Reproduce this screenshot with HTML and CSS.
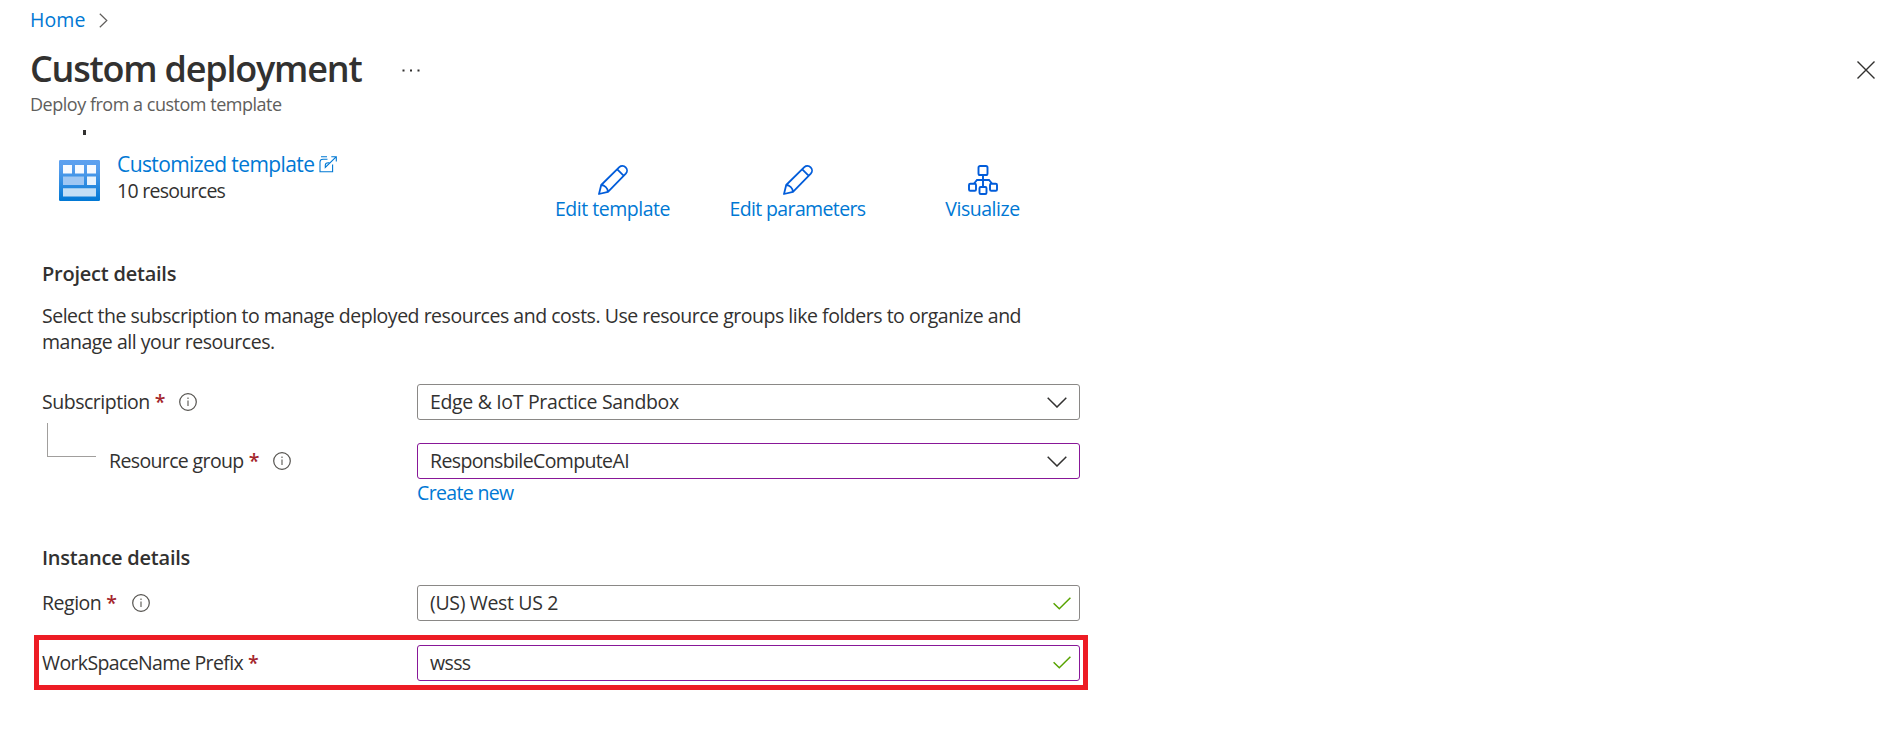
FILE: index.html
```
<!DOCTYPE html>
<html lang="en">
<head>
<meta charset="utf-8">
<title>Custom deployment</title>
<link rel="stylesheet" href="styles.css">
</head>
<body>
<svg class="defs" width="0" height="0" aria-hidden="true">
  <defs>
    <linearGradient id="tile" x1="0" y1="0" x2="0" y2="1">
      <stop offset="0" stop-color="#5ea0ef"/>
      <stop offset="0.2" stop-color="#589eed"/>
      <stop offset="1" stop-color="#0078d4"/>
    </linearGradient>
    <symbol id="info" viewBox="0 0 18 18">
      <circle cx="9" cy="9" r="8.3" fill="none" stroke="#55534f" stroke-width="1.2"/>
      <path d="M9 7.4V13M9 4.6V6" fill="none" stroke="#66645f" stroke-width="1.2"/>
    </symbol>
    <symbol id="chevron" viewBox="0 0 20 11">
      <path d="M.7.7 10 10 19.3.7" fill="none" stroke="#323130" stroke-width="1.5"/>
    </symbol>
    <symbol id="check" viewBox="0 0 18 13">
      <path d="M.6 6.2 6.3 11.8 17.4.7" fill="none" stroke="#57a300" stroke-width="1.5"/>
    </symbol>
    <symbol id="pencil" viewBox="0 0 30 30">
      <path d="M1 29 3.2 20 21.3 2.2a4.6 4.6 0 0 1 6.5 6.5L10 26.800ZM19.300 4.300 25.800 10.800M3.200 20C6.800 20.400 9.600 23.200 10 26.800" fill="none" stroke="#015cda" stroke-width="1.8" stroke-linejoin="round"/>
    </symbol>
  </defs>
</svg>

<nav class="breadcrumb">
  <a class="link home">Home</a>
  <svg class="crumb-arrow" viewBox="0 0 9 15"><path d="M.8.8 7.8 7.5.8 14.2" fill="none" stroke="#605e5c" stroke-width="1.2"/></svg>
</nav>

<header class="header">
  <div>
    <div class="title-row">
      <h1 class="title">Custom deployment</h1>
      <svg class="more" viewBox="0 0 18 3"><path d="M.5.5h2v2h-2zM8 .5h2v2H8zM15.500.5h2v2h-2z" fill="#323130"/></svg>
    </div>
    <p class="subtitle">Deploy from a custom template</p>
  </div>
  <svg class="close" viewBox="0 0 18 18"><path d="M.5.5l17 17M17.500.5l-17 17" fill="none" stroke="#323130" stroke-width="1.4"/></svg>
</header>

<main class="content">
  <!-- descender of the heading scrolled under the header -->
  <div class="scrolled-edge"></div>
  <section class="template">
    <svg class="tile" viewBox="0 0 41 41">
      <rect width="41" height="41" rx="1.2" fill="url(#tile)"/>
      <path d="M4 5h9v8.500H4zM16 5h9v8.500h-9zM28 5h9v8.500h-9z" fill="#f8faff"/>
      <path d="M4 16.500h21v8.500H4z" fill="#9fc7f3"/>
      <path d="M28 16.500h9v8.500h-9z" fill="#e8f3fd"/>
      <path d="M4 28.300h33v8.200H4z" fill="#c3dff6"/>
    </svg>
    <div class="template-info">
      <div class="template-link link"><span>Customized template</span>
        <svg class="external" viewBox="0 0 18 17"><path d="M8.500 3.200H4Q1 3.200 1 6V15.800H13.600V8.500M2 .7H8M12.300.7H17.300V5.500M17.100.9 6.300 11.500V9.300q0-2.500 3-2.500h1" fill="none" stroke="#0078d4" stroke-width="1.1"/></svg>
      </div>
      <div class="count">10 resources</div>
    </div>
    <div class="actions">
      <a class="action link"><svg class="action-icon"><use href="#pencil"/></svg><span>Edit template</span></a>
      <a class="action link"><svg class="action-icon"><use href="#pencil"/></svg><span class="tight">Edit parameters</span></a>
      <a class="action link"><svg class="action-icon" viewBox="0 0 30 30"><g fill="none" stroke="#015cda" stroke-width="1.9"><rect x="10.500" y="1" width="9" height="9" rx="1.600"/><rect x="1" y="18.800" width="7" height="7" rx="1.300"/><rect x="11.500" y="22" width="7" height="7" rx="1.300"/><rect x="22" y="18.800" width="7" height="7" rx="1.300"/><path d="M15 10V22M6.500 18.800v-.8l2.500-3h12l2.500 3v.8"/></g></svg><span>Visualize</span></a>
    </div>
  </section>

  <h2 class="heading project">Project details</h2>
  <p class="description">Select the subscription to manage deployed resources and costs. Use resource groups like folders to organize and manage all your resources.</p>

  <div class="field">
    <label class="label"><span>Subscription</span><span class="star">*</span><svg class="info"><use href="#info"/></svg></label>
    <div class="box"><span class="wide">Edge &amp; IoT Practice Sandbox</span><svg class="chevron"><use href="#chevron"/></svg></div>
  </div>
  <div class="field nested">
    <div class="elbow"></div>
    <label class="label"><span class="tight">Resource group</span><span class="star">*</span><svg class="info"><use href="#info"/></svg></label>
    <div class="box edited"><span class="tight">ResponsbileComputeAI</span><svg class="chevron"><use href="#chevron"/></svg></div>
  </div>
  <a class="create link">Create new</a>

  <h2 class="heading instance">Instance details</h2>
  <div class="field region">
    <label class="label"><span>Region</span><span class="star">*</span><svg class="info"><use href="#info"/></svg></label>
    <div class="box"><span class="wide">(US) West US 2</span><svg class="check"><use href="#check"/></svg></div>
  </div>
  <div class="field marked">
    <label class="label"><span class="tight">WorkSpaceName Prefix</span><span class="star">*</span></label>
    <div class="box edited"><span class="tight">wsss</span><svg class="check"><use href="#check"/></svg></div>
  </div>
</main>
</body>
</html>
```
FILE: styles.css
```
* { box-sizing: border-box; }
body {
  margin: 0;
  height: 746px;
  overflow: hidden;
  background: #fff;
  color: #323130;
  font: 19.5px/26px "Open Sans", "Noto Sans", sans-serif;
  letter-spacing: -0.48px;
}
h1, h2, p { margin: 0; }
svg { display: block; flex: none; }
.defs { position: absolute; }
.link { color: #0078d4; }

.breadcrumb { display: flex; align-items: center; padding: 7px 0 0 30px; height: 33px; }
.home { letter-spacing: 0.1px; }
.crumb-arrow { width: 9px; height: 15px; margin-left: 13px; }

.header { display: flex; justify-content: space-between; padding: 12px 16px 0 30px; height: 97px; }
.title-row { display: flex; align-items: center; height: 48px; }
.title { width: 372px; font-size: 36px; line-height: 48px; font-weight: 600; letter-spacing: -1.22px; white-space: nowrap; }
.more { width: 18px; height: 3px; margin-top: 3px; }
.subtitle { margin-top: -1px; font-size: 18px; line-height: 24px; color: #605e5c; }
.close { width: 18px; height: 18px; margin-top: 16px; }

.content { height: 616px; padding-left: 34px; }
.scrolled-edge { width: 3px; height: 5px; margin-left: 49px; background: #323130; }
.heading { margin-left: 8px; font-size: 20px; line-height: 26px; font-weight: 600; letter-spacing: -0.23px; }

.template { display: flex; height: 71px; margin-top: 16px; }
.tile { width: 41px; height: 41px; margin: 9px 17px 0 25px; }
.template-info { width: 403px; }
.template-link { display: flex; align-items: center; font-size: 21px; letter-spacing: -0.6px; }
.external { width: 18px; height: 17px; margin-left: 5px; }
.count { letter-spacing: -0.72px; margin-top: 1px; }
.actions { display: flex; padding-top: 14px; }
.action { width: 185px; display: flex; flex-direction: column; align-items: center; }
.action-icon { width: 30px; height: 30px; margin-bottom: 1px; }
.tight { letter-spacing: -0.63px; }

.project { margin-top: 39px; }
.description { width: 1000px; margin: 16px 0 0 8px; }

.field { display: flex; align-items: center; height: 36px; padding-left: 8px; margin-top: 29px; }
.label { display: flex; align-items: center; flex: none; width: 375px; }
.star { color: #a4262c; font-weight: 600; margin-left: 5px; width: 10px; }
.info { width: 18px; height: 18px; margin-left: 14px; }
.box {
  display: flex;
  align-items: center;
  justify-content: space-between;
  width: 663px;
  height: 36px;
  padding: 0 12px;
  border: 1px solid #8a8886;
  border-radius: 3px;
}
.edited { border-color: #881798; }
.wide { letter-spacing: -0.34px; }
.chevron { width: 20px; height: 11px; }
.check { width: 18px; height: 13px; margin-right: -4px; }

.nested { margin-top: 23px; padding-left: 13px; }
.elbow { width: 49px; height: 34px; margin: -43px 13px 0 0; border: solid #a19f9d; border-width: 0 0 1px 1px; }
.nested .label { width: 308px; }
.create { display: block; margin: 1px 0 0 383px; letter-spacing: -0.65px; }

.instance { margin-top: 39px; }
.region { margin-top: 14px; }
.region .info { margin-left: 16px; }
.marked { width: 1054px; height: 55px; margin-top: 14px; padding-left: 3px; border: 5px solid #ed1c24; }
```
